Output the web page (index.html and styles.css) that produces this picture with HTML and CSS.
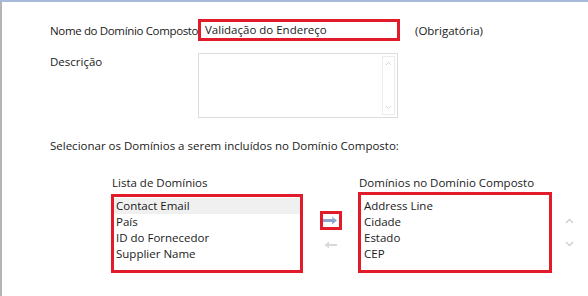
FILE: index.html
```html
<!DOCTYPE html>
<html lang="pt">
<head>
    <meta charset="UTF-8">
    <title>Domínio Composto</title>
    <link rel="stylesheet" href="styles.css">
</head>
<body>
    <div class="painel">
        <div class="linha linha-nome">
            <span class="rotulo">Nome do Domínio Composto</span>
            <div class="campo destaque">Validação do Endereço</div>
            <span class="obrig">(Obrigatória)</span>
        </div>

        <div class="linha linha-desc">
            <span class="rotulo">Descrição</span>
            <div class="area">
                <div class="rolagem">
                    <svg width="7" height="5" viewBox="0 0 7 5"><path d="M1 4 L3.5 1.5 L6 4" fill="none" stroke="#d6d6d6" stroke-width="1"/></svg>
                    <svg width="7" height="5" viewBox="0 0 7 5"><path d="M1 1 L3.5 3.5 L6 1" fill="none" stroke="#d6d6d6" stroke-width="1"/></svg>
                </div>
            </div>
        </div>

        <p class="instrucao">Selecionar os Domínios a serem incluídos no Domínio Composto:</p>

        <div class="listas">
            <div class="coluna">
                <span class="titulo-lista">Lista de Domínios</span>
                <ul class="lista destaque lista-esq">
                    <li class="sel">Contact Email</li>
                    <li>País</li>
                    <li>ID do Fornecedor</li>
                    <li>Supplier Name</li>
                </ul>
            </div>

            <div class="setas">
                <div class="botao destaque">
                    <svg width="15" height="9" viewBox="0 0 15 9"><path d="M0 3 H9 V0.5 L14 4.5 L9 8.5 V6 H0 Z" fill="#8ea6cf"/><path d="M0 3 H9 V0.5 L12 3 Z" fill="#b7c7e3"/></svg>
                </div>
                <div class="botao-inativo">
                    <svg width="13" height="8" viewBox="0 0 13 8"><path d="M13 3 H5 V0.5 L0.5 4 L5 7.5 V5 H13 Z" fill="#d9d9d9"/></svg>
                </div>
            </div>

            <div class="coluna">
                <span class="titulo-lista">Domínios no Domínio Composto</span>
                <ul class="lista destaque lista-dir">
                    <li>Address Line</li>
                    <li>Cidade</li>
                    <li>Estado</li>
                    <li>CEP</li>
                </ul>
            </div>

            <div class="ordem">
                <svg width="9" height="6" viewBox="0 0 9 6"><path d="M1 5 L4.5 1.5 L8 5" fill="none" stroke="#cfcfcf" stroke-width="1.4"/></svg>
                <svg width="9" height="6" viewBox="0 0 9 6"><path d="M1 1 L4.5 4.5 L8 1" fill="none" stroke="#cfcfcf" stroke-width="1.4"/></svg>
            </div>
        </div>
    </div>
</body>
</html>
```

FILE: styles.css
```css
*{
    box-sizing: border-box;
    margin: 0;
    padding: 0;
}
body{
    background-color: #ffffff;
    font-family: "Open Sans", "Noto Sans", sans-serif;
    font-size: 11.5px;
    color: #1a1a1a;
}
.painel{
    height: 296px;
    border-top: 2px solid #a9bbdd;
    border-left: 2px solid #b4b4b4;
    padding-left: 48px;
}
.linha{
    display: flex;
}
.rotulo{
    width: 148px;
    flex-shrink: 0;
    white-space: nowrap;
}
.linha-nome .rotulo{
    letter-spacing: -0.35px;
}
.destaque{
    border: 3px solid #e21b2b;
}
.linha-nome{
    margin-top: 17px;
    align-items: center;
}
.campo{
    width: 202px;
    height: 22px;
    padding-left: 4px;
    line-height: 16px;
    flex-shrink: 0;
}
.obrig{
    margin-left: 15px;
}
.linha-desc{
    margin-top: 12px;
}
.linha-desc .rotulo{
    margin-top: 1px;
}
.area{
    width: 200px;
    height: 65px;
    border: 1px solid #dcdcdc;
    display: flex;
    justify-content: flex-end;
}
.rolagem{
    width: 13px;
    margin: 2px 2px 2px 0;
    border: 1px solid #ececec;
    display: flex;
    flex-direction: column;
    justify-content: space-between;
    align-items: center;
    padding: 4px 0;
}
.instrucao{
    margin-top: 20px;
}
.listas{
    display: flex;
    margin-top: 22px;
    padding-left: 61px;
}
.coluna{
    display: flex;
    flex-direction: column;
}
.titulo-lista{
    padding-left: 1px;
    height: 16px;
    margin-bottom: 3px;
}
.lista{
    list-style: none;
    height: 79px;
    padding-top: 1px;
}
.lista li{
    height: 16px;
    line-height: 16px;
    padding-left: 2px;
}
.lista-esq{
    width: 192px;
}
.lista-esq li.sel{
    background-color: #f0f0f0;
}
.lista-dir{
    width: 194px;
    margin-top: -2px;
    height: 81px;
    padding-top: 3px;
}
.lista-dir li{
    padding-left: 3px;
}
.setas{
    width: 55px;
    display: flex;
    flex-direction: column;
    align-items: center;
    padding-top: 36px;
}
.botao{
    width: 22px;
    height: 19px;
    display: flex;
    align-items: center;
    justify-content: center;
}
.botao-inativo{
    margin-top: 10px;
    height: 10px;
    display: flex;
    align-items: center;
}
.ordem{
    display: flex;
    flex-direction: column;
    align-items: center;
    gap: 17px;
    margin-left: 13px;
    padding-top: 43px;
}
```
